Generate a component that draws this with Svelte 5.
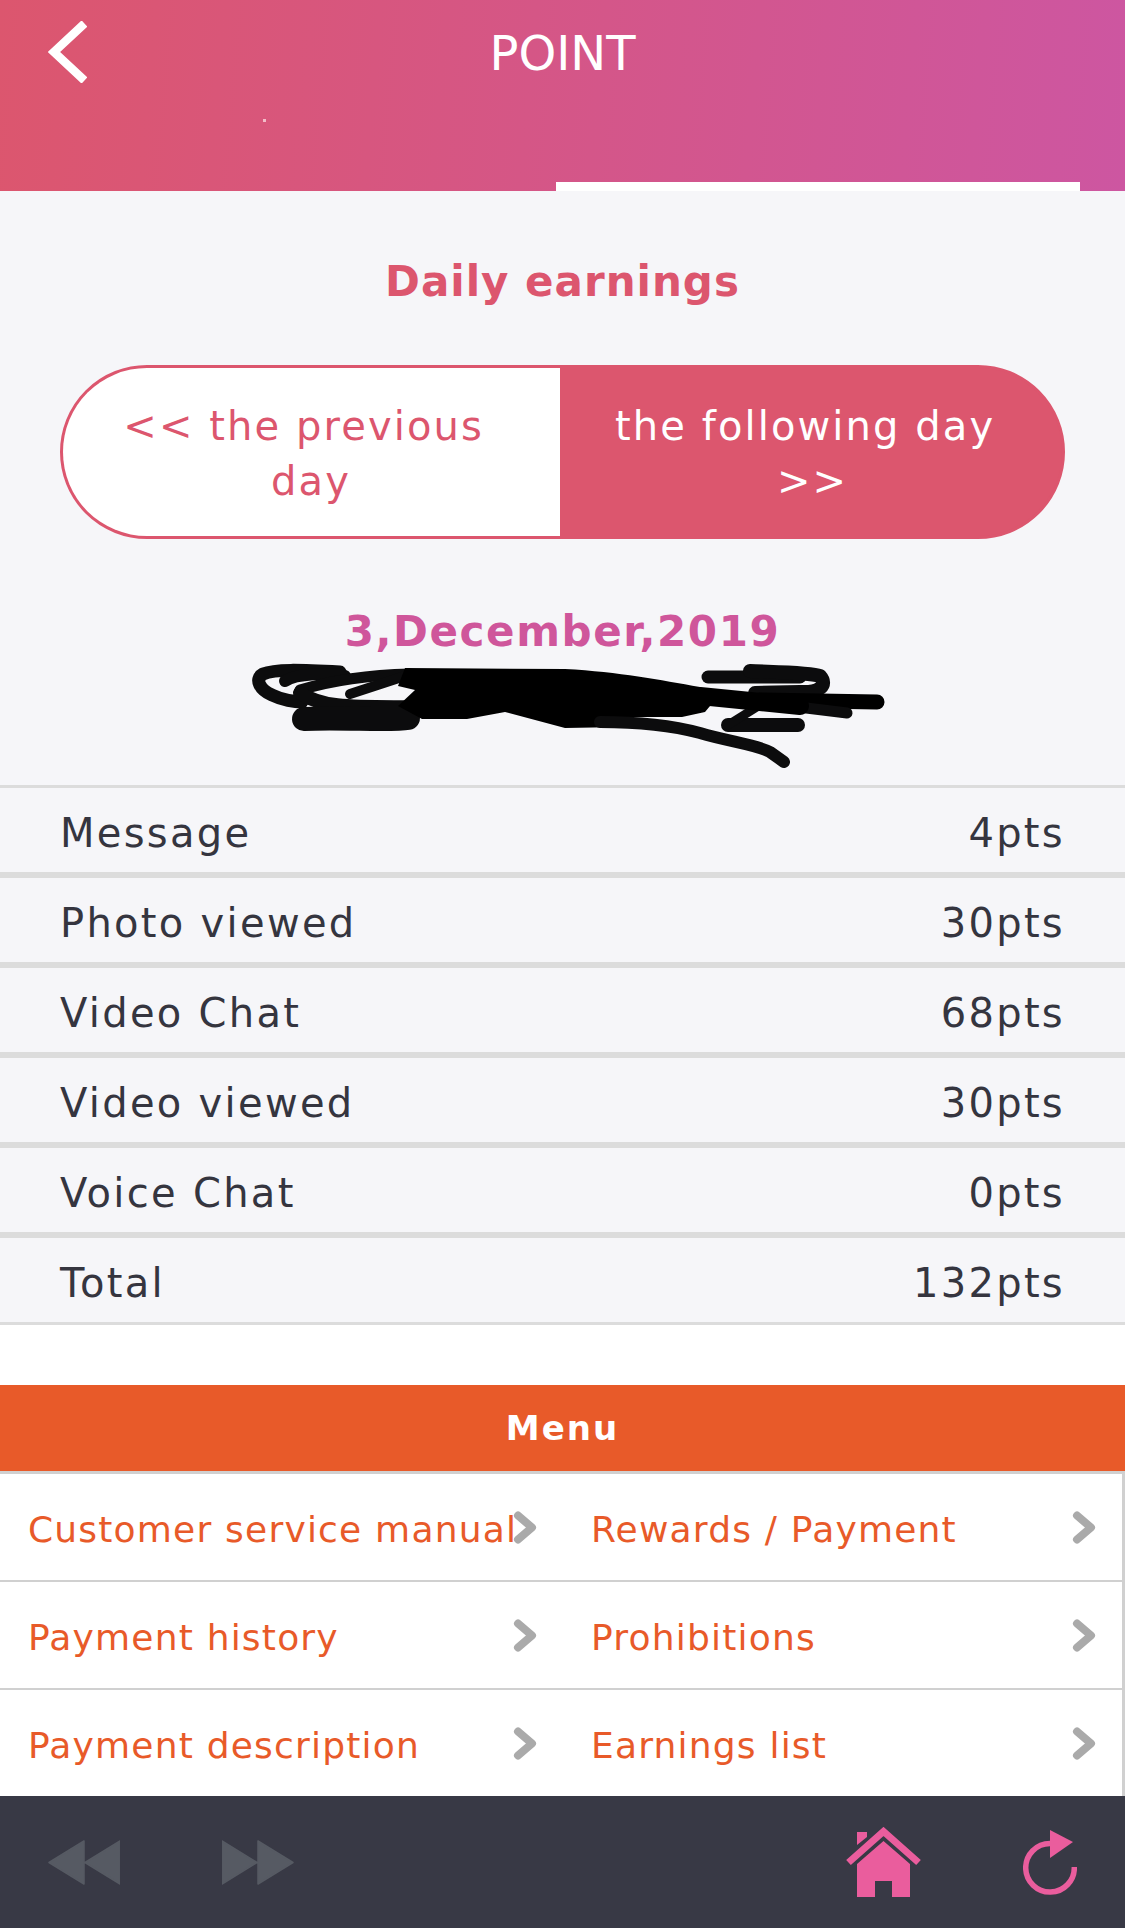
<script>
  const rows = [
    ["Message", "4pts"],
    ["Photo viewed", "30pts"],
    ["Video Chat", "68pts"],
    ["Video viewed", "30pts"],
    ["Voice Chat", "0pts"],
    ["Total", "132pts"],
  ];
  const menu = [
    "Customer service manual",
    "Rewards / Payment",
    "Payment history",
    "Prohibitions",
    "Payment description",
    "Earnings list",
  ];
</script>

<div class="page">
  <header>
    <div class="top">
      <svg class="back" viewBox="0 0 39 62"><path d="M36.500 2.500 L6 31 L36.500 59.500" fill="none" stroke="#fff" stroke-width="8.500" /></svg>
      <h1>POINT</h1>
    </div>
    <span class="speck"></span>
    <div class="tab"></div>
  </header>

  <main>
    <h2>Daily earnings</h2>
    <div class="pager">
      <div class="prev"><span>&lt;&lt; the previous&nbsp;<br />day</span></div>
      <div class="next"><span>the following day&nbsp;<br />&gt;&gt;</span></div>
    </div>
    <p class="date">3,December,2019</p>
    <svg class="scribble" viewBox="250 660 640 110">
      <g fill="none" stroke="#0c0c0d" stroke-linecap="round" stroke-linejoin="round">
        <path stroke-width="13" d="M340 672 C300 670 275 669 263 674 C254 679 260 690 272 695 C282 700 295 702 302 702" />
        <path stroke-width="12" d="M285 681 C295 674 330 672 345 676" />
        <path stroke-width="11" d="M300 690 C330 681 370 675 410 674" />
        <path stroke-width="10" d="M350 694 L405 676" />
        <path stroke-width="14" d="M300 693 C320 706 340 708 420 707" />
        <path stroke-width="24" d="M304 719 C340 717 390 721 408 718" />
        <path stroke-width="12" d="M430 712 L462 713" />
        <path fill="#000" stroke="none" d="M405 668 L565 669 C620 672 660 680 700 687 L715 700 L705 712 L682 717 L625 717 L622 727 L565 728 L505 712 L467 719 L422 719 L398 706 L415 690 L398 686Z" />
        <path stroke-width="12" d="M600 722 C640 722 670 725 700 733 C730 742 755 744 770 752 L784 762" />
        <path stroke-width="13" d="M708 677 L800 677" />
        <path stroke-width="14" d="M750 671 C770 672 810 672 820 676 C828 685 820 693 800 692 L755 693" />
        <path stroke="#000" stroke-width="15" d="M760 700 L877 702" />
        <path stroke-width="11" d="M790 706 L847 713" />
        <path stroke-width="14" d="M728 725 L798 725" />
        <path stroke-width="9" d="M728 725 L760 705" />
        <path stroke="#000" stroke-width="18" d="M700 696 L800 706" />
      </g>
    </svg>
    <ul class="table">
      {#each rows as [label, value]}
        <li>
          <span>{label}</span>
          <span>{value}</span>
        </li>
      {/each}
    </ul>
  </main>

  <div class="gap"></div>

  <section class="menu">
    <h3>Menu</h3>
    <div class="grid">
      {#each menu as item}
        <a href="#top">
          <span>{item}</span>
          <svg viewBox="0 0 24 33"><path d="M5 4.500 L19 16.500 L5 28.500" fill="none" stroke="#aaa" stroke-width="8" stroke-linecap="round" stroke-linejoin="round" /></svg>
        </a>
      {/each}
    </div>
  </section>

  <footer>
    <div class="arrows">
      <svg viewBox="0 0 72 45"><path d="M36 1 L36 44 L1 22.500Z M72 1 L72 44 L37 22.500Z" fill="#565a63" stroke="#565a63" stroke-width="1.500" stroke-linejoin="round" /></svg>
      <svg viewBox="0 0 72 45"><path d="M0 1 L0 44 L35 22.500Z M36 1 L36 44 L71 22.500Z" fill="#565a63" stroke="#565a63" stroke-width="1.500" stroke-linejoin="round" /></svg>
    </div>
    <div class="actions">
      <svg class="home" viewBox="0 0 75 70">
        <path fill="#ea5d9d" d="M11 5 H21 V10 L11 18Z" />
        <path fill="none" stroke="#ea5d9d" stroke-width="7" d="M2.500 35.500 L37.500 4.500 L72.500 35.500" />
        <path fill="#ea5d9d" d="M37.500 14 L64 37 V70 H46 V54 H29 V70 H11 V37Z" />
      </svg>
      <svg class="reload" viewBox="0 0 54 65">
        <path fill="none" stroke="#ea5d9d" stroke-width="5.500" d="M27 13.500 A24.300 24.300 0 1 0 51.300 37" />
        <path fill="#ea5d9d" d="M27 0 L50 12 L27 28Z" />
      </svg>
    </div>
  </footer>
</div>

<style>
  :global(body) {
    margin: 0;
    background: #fff;
  }
  .page {
    width: 1125px;
    height: 1928px;
    display: flex;
    flex-direction: column;
    overflow: hidden;
    font-family: "DejaVu Sans", sans-serif;
  }
  header {
    position: relative;
    height: 191px;
    flex: none;
    display: flex;
    flex-direction: column;
    background: linear-gradient(95deg, #dc566e, #cd56a1);
  }
  .top {
    height: 100px;
    position: relative;
    text-align: center;
  }
  .back {
    position: absolute;
    left: 48px;
    top: 21px;
    width: 39px;
    height: 62px;
  }
  h1 {
    margin: 0;
    padding-top: 24px;
    font-size: 48px;
    line-height: 58px;
    font-weight: 400;
    color: #fff;
  }
  .speck {
    position: absolute;
    left: 263px;
    top: 119px;
    width: 3px;
    height: 3px;
    background: #f2bcc8;
  }
  .tab {
    margin: auto 45px 0 556px;
    height: 9px;
    background: #fff;
  }
  main {
    height: 1134px;
    flex: none;
    background: #f6f6f9;
    display: flex;
    flex-direction: column;
    align-items: center;
  }
  main > * {
    flex: none;
  }
  h2 {
    margin: 0;
    padding-top: 66px;
    font-size: 42px;
    line-height: 50px;
    letter-spacing: 1px;
    font-weight: 700;
    color: #dc566e;
  }
  .pager {
    margin: 58px 0 0 -1px;
    width: 1005px;
    height: 174px;
    display: grid;
    grid-template-columns: 497px 502px;
    box-sizing: border-box;
    border: 3px solid #dc566e;
    border-radius: 87px;
    background: #dc566e;
    overflow: hidden;
    font-size: 40px;
    line-height: 55px;
    letter-spacing: 2.100px;
    text-align: center;
  }
  .prev,
  .next {
    display: flex;
    align-items: center;
    justify-content: center;
    white-space: nowrap;
  }
  .prev span,
  .next span {
    padding-top: 3px;
  }
  .next span {
    padding-left: 4px;
  }
  .prev {
    background: #fff;
    color: #dc566e;
  }
  .next {
    background: #dc566e;
    color: #fff;
  }
  .date {
    margin: 68px 0 0;
    font-size: 42px;
    line-height: 50px;
    letter-spacing: 1.600px;
    font-weight: 700;
    color: #cf569b;
  }
  .scribble {
    display: block;
    width: 640px;
    height: 110px;
    margin: 3px 0 0 15px;
  }
  .table {
    list-style: none;
    margin: 15px 0 0;
    padding: 0;
    width: 100%;
    border-top: 3px solid #dcdcdc;
  }
  .table li {
    height: 84px;
    padding: 0 60px;
    display: flex;
    align-items: center;
    justify-content: space-between;
    border-bottom: 6px solid #dcdcdc;
    font-size: 40px;
    letter-spacing: 2.300px;
    color: #35353f;
  }
  .table li span {
    padding-top: 5px;
  }
  .table li:last-child {
    border-bottom-width: 3px;
  }
  .gap {
    height: 60px;
    flex: none;
  }
  .menu {
    height: 411px;
    flex: none;
    overflow: hidden;
  }
  h3 {
    margin: 0;
    height: 86px;
    line-height: 86px;
    background: #e85a29;
    color: #fff;
    font-size: 34px;
    letter-spacing: 2px;
    font-weight: 700;
    text-align: center;
  }
  .grid {
    display: grid;
    grid-template-columns: 563px 559px;
    grid-auto-rows: 108px;
    border-top: 3px solid #d0d0d0;
    border-right: 3px solid #d0d0d0;
  }
  .grid a {
    box-sizing: border-box;
    min-width: 0;
    display: flex;
    align-items: center;
    justify-content: space-between;
    padding: 0 26px 0 28px;
    border-bottom: 2px solid #d0d0d0;
    color: #e85a29;
    font-size: 36px;
    letter-spacing: 1.200px;
    text-decoration: none;
  }
  .grid span {
    flex: 1 1 0;
    min-width: 0;
    white-space: nowrap;
    padding-top: 4px;
  }
  .grid svg {
    width: 24px;
    height: 33px;
    flex: none;
  }
  footer {
    height: 132px;
    flex: none;
    background: #383945;
    display: flex;
    align-items: center;
    justify-content: space-between;
    padding: 0 48px;
  }
  .arrows {
    display: flex;
    gap: 102px;
  }
  .arrows svg {
    width: 72px;
    height: 45px;
  }
  .actions {
    display: flex;
    align-items: center;
    gap: 102px;
  }
  .home {
    width: 75px;
    height: 70px;
  }
  .reload {
    width: 54px;
    height: 65px;
  }
</style>
